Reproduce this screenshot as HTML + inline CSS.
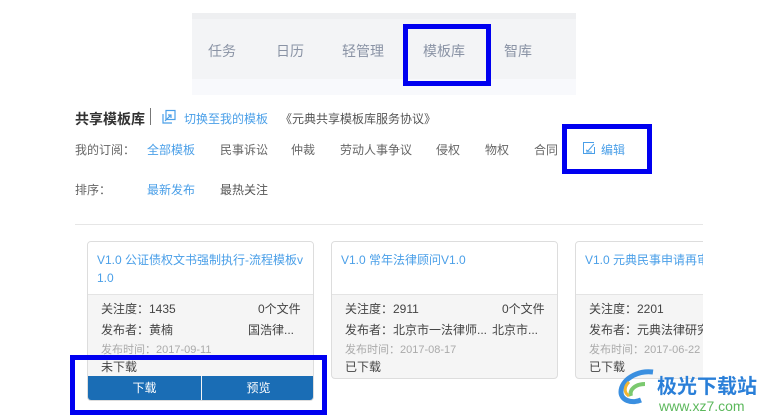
<!DOCTYPE html>
<html><head><meta charset="utf-8"><style>
*{margin:0;padding:0;box-sizing:border-box}
body{width:772px;height:419px;background:#fff;position:relative;overflow:hidden;font-family:"Liberation Sans","Noto Sans CJK SC",sans-serif;font-size:12px;color:#333}
.a{position:absolute;white-space:nowrap}
.bb{position:absolute;border:5px solid #0000f0}
.card{position:absolute;border:1px solid #ddd;border-radius:4px;background:#f5f5f5;overflow:hidden}
.ch{background:#fff;height:53px;border-bottom:1px solid #e4e4e4;padding:9px 9px;color:#4a9fe8;font-size:12px;line-height:18px}
.l{position:absolute;font-size:12px;color:#444;line-height:14px}
.g{color:#aaa;font-size:11px}
</style></head><body>
<div class="a" style="left:192px;top:13px;width:384px;height:6px;background:#eeeff1"></div>
<div class="a" style="left:192px;top:19px;width:384px;height:60px;background:#f3f4f6"></div>
<div class="a" style="left:192px;top:79px;width:384px;height:16px;background:#f8f9fc"></div>
<div class="a" style="left:208px;top:41px;font-size:14px;color:#8a93a5">任务</div>
<div class="a" style="left:276px;top:41px;font-size:14px;color:#8a93a5">日历</div>
<div class="a" style="left:342px;top:41px;font-size:14px;color:#8a93a5">轻管理</div>
<div class="a" style="left:423px;top:41px;font-size:14px;color:#8a93a5">模板库</div>
<div class="a" style="left:504px;top:41px;font-size:14px;color:#8a93a5">智库</div>
<div class="bb" style="left:403px;top:24px;width:88px;height:62px"></div>

<div class="a" style="left:75px;top:109px;font-size:14px;font-weight:bold;color:#333">共享模板库</div>
<div class="a" style="left:150px;top:108px;width:1px;height:17px;background:#777"></div>
<svg class="a" style="left:161px;top:109px" width="16" height="16" viewBox="0 0 16 16" fill="none" stroke="#4a9fe8" stroke-width="1.2"><rect x="5" y="1.5" width="9" height="9"/><path d="M2 5v9h9M4 12l6-6M7 6h3v3"/></svg>
<div class="a" style="left:184px;top:110px;color:#4a9fe8">切换至我的模板</div>
<div class="a" style="left:280px;top:110px;color:#555">《元典共享模板库服务协议》</div>

<div class="a" style="left:75px;top:141px;color:#666">我的订阅：</div>
<div class="a" style="left:147px;top:141px;color:#4a9fe8">全部模板</div>
<div class="a" style="left:220px;top:141px;color:#666">民事诉讼</div>
<div class="a" style="left:291px;top:141px;color:#666">仲裁</div>
<div class="a" style="left:340px;top:141px;color:#666">劳动人事争议</div>
<div class="a" style="left:436px;top:141px;color:#666">侵权</div>
<div class="a" style="left:485px;top:141px;color:#666">物权</div>
<div class="a" style="left:534px;top:141px;color:#666">合同</div>
<svg class="a" style="left:582px;top:141px" width="14" height="14" viewBox="0 0 14 14" fill="none" stroke="#4a9fe8" stroke-width="1"><path d="M12 1.5H1.5v11h11V6"/><path d="M4 9l2 1 6-7"/><path d="M4 11h6"/></svg>
<div class="a" style="left:601px;top:141px;color:#4a9fe8">编辑</div>
<div class="bb" style="left:562px;top:124px;width:90px;height:50px"></div>

<div class="a" style="left:75px;top:181px;color:#666">排序：</div>
<div class="a" style="left:147px;top:181px;color:#4a9fe8">最新发布</div>
<div class="a" style="left:220px;top:181px;color:#555">最热关注</div>
<div class="a" style="left:75px;top:224px;width:628px;height:1px;background:#e6e6e6"></div>

<div class="card" style="left:87px;top:241px;width:227px;height:160px">
<div class="ch">V1.0 公证债权文书强制执行-流程模板v<br>1.0</div>
<div class="l" style="left:13px;top:60px">关注度：1435</div><div class="l" style="left:170px;top:60px">0个文件</div>
<div class="l" style="left:13px;top:81px">发布者：黄楠</div><div class="l" style="left:160px;top:81px">国浩律...</div>
<div class="l g" style="left:13px;top:101px">发布时间：2017-09-11</div>
<div class="l" style="left:13px;top:118px">未下载</div>
<div class="a" style="left:0;top:134px;width:113px;height:25px;background:#1a6db5;color:#fff;text-align:center;line-height:25px">下载</div>
<div class="a" style="left:114px;top:134px;width:113px;height:25px;background:#1a6db5;color:#fff;text-align:center;line-height:25px">预览</div>
</div>
<div class="card" style="left:331px;top:241px;width:227px;height:138px">
<div class="ch">V1.0 常年法律顾问V1.0</div>
<div class="l" style="left:13px;top:60px">关注度：2911</div><div class="l" style="left:170px;top:60px">0个文件</div>
<div class="l" style="left:13px;top:81px">发布者：北京市一法律师...</div><div class="l" style="left:160px;top:81px">北京市...</div>
<div class="l g" style="left:13px;top:101px">发布时间：2017-08-17</div>
<div class="l" style="left:13px;top:118px">已下载</div>
</div>
<div class="card" style="left:575px;top:241px;width:160px;height:138px">
<div class="ch">V1.0 元典民事申请再审</div>
<div class="l" style="left:13px;top:60px">关注度：2201</div>
<div class="l" style="left:13px;top:81px">发布者：元典法律研究</div>
<div class="l g" style="left:13px;top:101px">发布时间：2017-06-22</div>
<div class="l" style="left:13px;top:118px">已下载</div>
</div>
<div class="a" style="left:703px;top:230px;width:69px;height:189px;background:#fff"></div>
<div class="bb" style="left:70px;top:355px;width:257px;height:60px"></div>

<svg class="a" style="left:615px;top:368px" width="44" height="40" viewBox="0 0 44 40"><path d="M38 4C22 2 6 12 6 24c0 8 10 12 20 8" fill="none" stroke="#3a8fe0" stroke-width="5"/><path d="M30 16c-10 0-16 6-14 12" fill="none" stroke="#7bc96f" stroke-width="4"/><path d="M14 14c-4 4-6 10 0 14" fill="none" stroke="#f2b632" stroke-width="3"/></svg>
<div class="a" style="left:657px;top:370px;font-size:20px;font-weight:bold;color:#2a7fd8">极光下载站</div>
<div class="a" style="left:659px;top:398px;font-size:14px;color:#5cb85c">www.xz7.com</div>
</body></html>
